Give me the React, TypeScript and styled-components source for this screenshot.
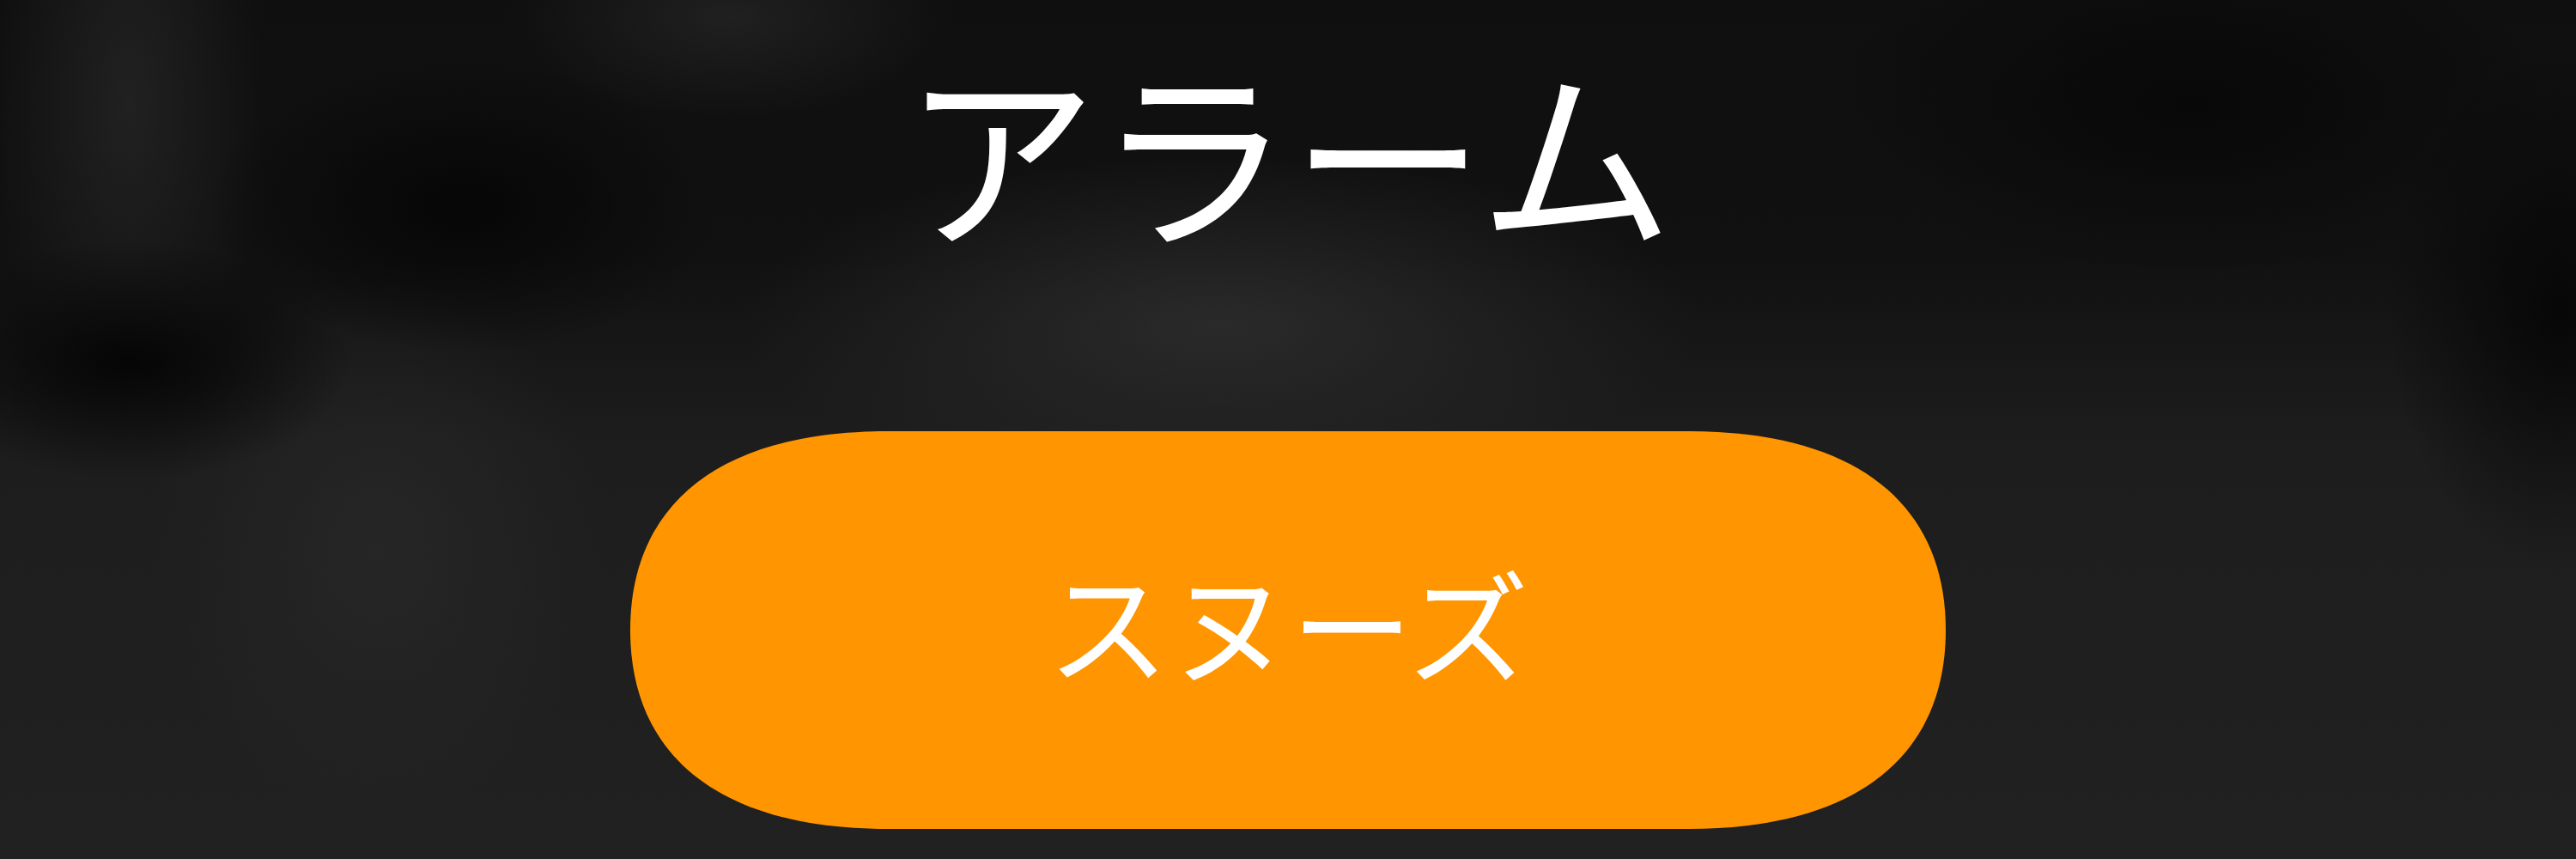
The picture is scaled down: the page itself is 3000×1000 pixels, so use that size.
import React from 'react';
import styled, { createGlobalStyle } from 'styled-components';

const GlobalStyle = createGlobalStyle`
  html, body {
    margin: 0;
    padding: 0;
    background: #1c1c1c;
  }
`;

// continuous-corner outline of the snooze pill (1532 x 463)
const PILL_PATH =
  "path('M 300 0 L 1232 0 C 1432 0 1532 88 1532 231.5 C 1532 375 1432 463 1232 463 L 300 463 C 100 463 0 375 0 231.5 C 0 88 100 0 300 0 Z')";

function App() {
  return (
    <>
      <GlobalStyle />
      <StyledPage>
        <StyledTitle>アラーム</StyledTitle>
        <StyledSnoozeButton type="button">スヌーズ</StyledSnoozeButton>
      </StyledPage>
    </>
  );
}

export default App;

const StyledPage = styled.div`
  display: flex;
  flex-direction: column;
  align-items: center;
  width: 3000px;
  height: 1000px;
  padding-top: 61px;
  box-sizing: border-box;
  overflow: hidden;
  font-family: 'Noto Sans CJK JP', 'Noto Sans', sans-serif;
  background-color: #1e1e1e;
  background-image:
    radial-gradient(ellipse 300px 170px at 540px 240px, #060606 0%, rgba(6, 6, 6, 0) 100%),
    radial-gradient(ellipse 260px 140px at 150px 420px, #050505 0%, rgba(5, 5, 5, 0) 100%),
    radial-gradient(ellipse 420px 200px at 2550px 120px, #080808 0%, rgba(8, 8, 8, 0) 100%),
    radial-gradient(ellipse 200px 300px at 2980px 360px, #070707 0%, rgba(7, 7, 7, 0) 100%),
    radial-gradient(ellipse 160px 380px at 150px 120px, #212121 0%, rgba(33, 33, 33, 0) 100%),
    radial-gradient(ellipse 260px 120px at 850px 20px, #202020 0%, rgba(32, 32, 32, 0) 100%),
    radial-gradient(ellipse 560px 200px at 1420px 380px, #2a2a2a 0%, rgba(42, 42, 42, 0) 100%),
    radial-gradient(ellipse 260px 320px at 440px 640px, #262626 0%, rgba(38, 38, 38, 0) 100%),
    linear-gradient(180deg, #0f0f0f 0px, #111111 300px, #1d1d1d 520px, #212121 1000px);
`;

const StyledTitle = styled.h1`
  margin: 0;
  font-size: 226px;
  font-weight: 400;
  line-height: 1;
  color: #ffffff;
`;

const StyledSnoozeButton = styled.button`
  display: flex;
  align-items: center;
  justify-content: center;
  flex-shrink: 0;
  width: 1532px;
  height: 463px;
  margin-top: 215px;
  padding: 0 0 22px;
  border: none;
  clip-path: ${PILL_PATH};
  background-color: #ff9500;
  font-family: inherit;
  font-size: 142px;
  font-weight: 400;
  color: #ffffff;
  cursor: pointer;
`;
